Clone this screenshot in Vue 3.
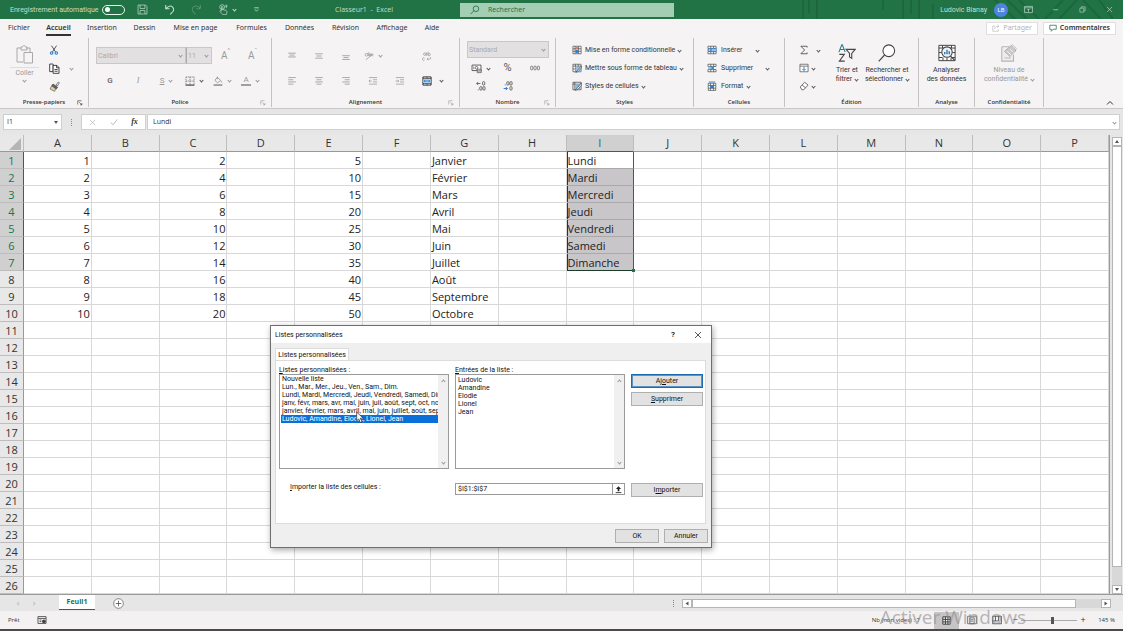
<script setup>
import { ref } from 'vue'

const autosave = ref(false)
const search = ref('')
const nameBox = ref('I1')
const formula = ref('Lundi')
const zoom = ref(56)
const range = ref('$I$1:$I$7')
const selectedList = ref(5)

const tabs = [
  { name: 'Fichier', w: 38 },
  { name: 'Accueil', w: 41 },
  { name: 'Insertion', w: 46 },
  { name: 'Dessin', w: 39 },
  { name: 'Mise en page', w: 63 },
  { name: 'Formules', w: 49 },
  { name: 'Données', w: 47 },
  { name: 'Révision', w: 45 },
  { name: 'Affichage', w: 48 },
  { name: 'Aide', w: 32 }
]

const columns = 'ABCDEFGHIJKLMNOP'.split('')
const months = ['Janvier', 'Février', 'Mars', 'Avril', 'Mai', 'Juin', 'Juillet', 'Août', 'Septembre', 'Octobre']
const days = ['Lundi', 'Mardi', 'Mercredi', 'Jeudi', 'Vendredi', 'Samedi', 'Dimanche']

function cell(col, row) {
  if (col === 'I') return days[row - 1] ?? ''
  if (row > 10) return ''
  if (col === 'A') return row
  if (col === 'C') return row * 2
  if (col === 'E') return row * 5
  if (col === 'G') return months[row - 1]
  return ''
}

function cellClass(col, row) {
  const inRange = col === 'I' && row <= 7
  return {
    num: 'ACE'.includes(col),
    sel: inRange,
    first: inRange && row === 1,
    last: inRange && row === 7
  }
}

const lists = [
  'Nouvelle liste',
  'Lun., Mar., Mer., Jeu., Ven., Sam., Dim.',
  'Lundi, Mardi, Mercredi, Jeudi, Vendredi, Samedi, Dimanche',
  'janv, févr, mars, avr, mai, juin, juil, août, sept, oct, nov, déc',
  'janvier, février, mars, avril, mai, juin, juillet, août, septembre',
  'Ludovic, Amandine, Elodie, Lionel, Jean'
]
const entries = ref('Ludovic\nAmandine\nElodie\nLionel\nJean')

const line = 'fill="none" stroke="currentColor"'
const icons = {
  save: `<g ${line}><path d="M1.5 1.5h11l2 2v11h-13z"/><path d="M4.500 1.500v5h7v-5M4.500 14.500v-5h7v5"/></g>`,
  undo: `<g ${line} stroke-width="1.500"><path d="M2.500 1.500v5.500h5.500M2.800 6.800C6 2.500 10 2 12.500 4.500s2 5.500-1 8L9 15"/></g>`,
  redo: `<g ${line} stroke-width="1.500" stroke-dasharray="2 1"><path d="M13.500 1.500v5.500H8M13.200 6.800C10 2.500 6 2 3.500 4.500s-2 5.500 1 8L7 15"/></g>`,
  touch: `<g ${line}><circle cx="6" cy="4.500" r="3.500"/><path d="M5 10V4.500c0-1.500 2-1.500 2 0V8l5 1.500c1 .5 1 1.500 1 2.500l-1 3.500H7L3 11c-.5-1.500 1-2 2-1M12 1v5M10 3h4"/></g>`,
  custom: `<g ${line} stroke-width="1.500"><path d="M4 5h8M5 8l3 3 3-3"/></g>`,
  search: `<g ${line} stroke-width="1.300"><circle cx="9.500" cy="6" r="4.500"/><path d="M6.300 9.200 1 14.500"/></g>`,
  display: `<g ${line} stroke-width="1.200"><path d="M1 2.500h14v11H1zM1 5h14M8 12V7M6 9l2-2 2 2"/></g>`,
  min: `<path d="M2 8.500h12" ${line} stroke-width="1.500"/>`,
  restore: `<g ${line} stroke-width="1.300"><path d="M2 5h9v9H2z"/><path d="M5 5V2h9v9h-3"/></g>`,
  close: `<path d="m2 2 12 12M14 2 2 14" ${line} stroke-width="1.400"/>`,
  share: `<g ${line} stroke-width="1.200"><path d="M6 4H1.500v10.500h11V10M5 10c0-4 3-5.500 8-5.500M10.500 1.500l3.500 3-3.500 3"/></g>`,
  comment: `<path d="M1.500 2.500h13v8H8l-3.500 4v-4h-3z" ${line} stroke-width="1.500"/>`,
  paste: `<g fill="none" stroke="#a9a9a9"><path d="M8 18H2V4h4M11 4h4v4"/><path d="M6 3h1.500c.3-2 2.700-2 3 0H12v3H6z"/><path d="M9 8.500h8.500V19H9z" fill="#f6f4f5"/></g>`,
  cut: `<g fill="none" stroke="#333" stroke-width="1.300"><path d="m4 1 6.500 10M12 1 5.500 11"/></g><g fill="none" stroke="#2b7fd0" stroke-width="1.800"><circle cx="4.300" cy="12.800" r="2"/><circle cx="11.700" cy="12.800" r="2"/></g>`,
  copy: `<g fill="#fff" stroke="#333" stroke-width="1.300"><path d="M1 1.500h5v11H1z"/><path d="M6 3.500h5.500l3 3v8.500H6zM11 3.500V7h3.500M8 9.500h4.500M8 12h4.500"/></g>`,
  brush: `<path d="m10 6 3.500-4.500 1.500 1L12 7.500z" fill="#fff" stroke="#444"/><path d="m6 4.500 6.500 5-2 2-6.500-5z" fill="#666" stroke="#333"/><path d="m4 7 6 5-2 3-6.500-3.500z" fill="#e9cfa0" stroke="#555"/>`,
  border: `<path d="M1.500 1.500h13M1.500 1.500v13M14.500 1.500v13M8 1.500v13M1.500 8h13" fill="none" stroke="#555" stroke-dasharray="2 1"/><path d="M1 14.500h14" stroke="#222" stroke-width="1.600"/>`,
  fill: `<path d="m7 2 5 5-4.500 4L3 7zM7 1v4M12.500 7.500l1.500 3" fill="none" stroke="#888" stroke-width="1.200"/><path d="M1 13h14v3H1z" fill="#a0a0a0"/>`,
  top: `<path d="M2 3.500h12M4 6.500h8M2 9.500h12" ${line} stroke-width="1.300"/>`,
  mid: `<path d="M2 4.500h12M4 8h8M2 11.500h12" ${line} stroke-width="1.300"/>`,
  bot: `<path d="M2 7.500h12M4 10.500h8M2 13.500h12" ${line} stroke-width="1.300"/>`,
  left: `<path d="M2 2.500h12M2 6h8M2 9.500h12M2 13h8" ${line} stroke-width="1.300"/>`,
  center: `<path d="M2 2.500h12M4 6h8M2 9.500h12M4 13h8" ${line} stroke-width="1.300"/>`,
  right: `<path d="M2 2.500h12M6 6h8M2 9.500h12M6 13h8" ${line} stroke-width="1.300"/>`,
  orient: `<g ${line} stroke-width="1.200"><circle cx="4" cy="6" r="2.200"/><path d="M6 3.500 7.500 8M7 2l3.500 6"/><circle cx="10" cy="6.500" r="1.800"/><path d="m3 14 11-9M14 8.500V5h-3.500"/></g>`,
  wrap: `<g ${line} stroke-width="1.200"><circle cx="4.500" cy="5" r="2"/><path d="M7 2.500V7.500M9.500 1v6.500M4 11.500a2 2 0 1 0 0 3M8 13h4.500c2 0 2-3 0-3M10 11l-2 2 2 2"/><circle cx="11.500" cy="5.500" r="1.800"/></g>`,
  outdent: `<path d="M1.500 2.500h13M8 6h6.500M8 9.500h6.500M1.500 13h13M6 8H1.500M3.500 6l-2 2 2 2" ${line} stroke-width="1.200"/>`,
  indent: `<path d="M1.500 2.500h13M8 6h6.500M8 9.500h6.500M1.500 13h13M1 8h5M4 6l2 2-2 2" ${line} stroke-width="1.200"/>`,
  merge: `<path d="M1.500 1.500h13v13h-13z" fill="#fff" stroke="#222" stroke-width="1.500"/><path d="M1.500 4h13M1.500 12h13M8 1v3M8 12v3" stroke="#222"/><path d="M2.500 5h11v6h-11z" fill="#a8d3f5"/><path d="M3.500 8h9M5.500 6l-2 2 2 2M10.500 6l2 2-2 2" fill="none" stroke="#1674c8" stroke-width="1.200"/>`,
  money: `<path d="M1.500 3h13v8h-13z" fill="#fff" stroke="#444" stroke-width="1.200"/><circle cx="8" cy="7" r="2" fill="none" stroke="#444"/><path d="M4 5v4M9 9h6v5H9z" fill="#f3d9c2" stroke="#555"/><path d="M9 11.500h6" stroke="#555"/>`,
  thousand: `<g fill="none" stroke="#666" stroke-width="1.200"><rect x="1" y="5" width="3.500" height="6" rx="1.500"/><rect x="6.300" y="5" width="3.500" height="6" rx="1.500"/><rect x="11.600" y="5" width="3.500" height="6" rx="1.500"/></g>`,
  decPlus: `<path d="M7 4H1M3.500 1.500 1 4l2.500 2.500" fill="none" stroke="#1674c8" stroke-width="1.400"/><g fill="none" stroke="#444" stroke-width="1.200"><rect x="10.500" y="1" width="3.500" height="5.500" rx="1.500"/><rect x="6" y="9" width="3.500" height="5.500" rx="1.500"/><rect x="11" y="9" width="3.500" height="5.500" rx="1.500"/><path d="M3.500 13.500v1.500"/></g>`,
  decMinus: `<path d="M1 12h6M4.500 9.500 7 12l-2.500 2.500" fill="none" stroke="#1674c8" stroke-width="1.400"/><g fill="none" stroke="#444" stroke-width="1.200"><rect x="6" y="1" width="3.500" height="5.500" rx="1.500"/><rect x="11" y="1" width="3.500" height="5.500" rx="1.500"/><rect x="11" y="9" width="3.500" height="5.500" rx="1.500"/><path d="M3.500 5.500V7"/></g>`,
  cond: `<path d="M1.500 2h13v12h-13zM5 2v12M10.500 2v12M1.500 6h13M1.500 10h13" fill="#fff" stroke="#444" stroke-width="1.100"/><path d="M6 3h3.500v4H6z" fill="#e07a6a"/><path d="M6 8h3.500v5H6z" fill="#2b7fd0"/>`,
  table: `<path d="M1.500 2h13v12h-13zM5.500 2v12M10 2v12M1.500 5h13M1.500 9.500h13" fill="#fff" stroke="#444" stroke-width="1.100"/><path d="M5.500 6H14v7.500H5.500z" fill="#8fc3ee"/><path d="m15 5-6 6.500-3 3.500 4-1.500L15.500 7z" fill="#fff" stroke="#333"/>`,
  style: `<path d="M1.500 2h13v12h-13zM4.500 2v12M1.500 5h13" fill="#fff" stroke="#444" stroke-width="1.200"/><path d="M5 5.500h8.500V13H5z" fill="#7db8ea"/><path d="m15 3-6 7.500-4 4.500 5-2L15.500 6z" fill="#fff" stroke="#333"/>`,
  insert: `<path d="M1.500 2h13v3.500h-13zM1.500 10.500h13V14h-13zM6 2v3.500M10.500 2v3.500M6 10.500V14M10.500 10.500V14" fill="#fff" stroke="#444" stroke-width="1.100"/><path d="M6 5.500h9v5H6z" fill="#8fc3ee" stroke="#1674c8"/><path d="M8 8H1M3.500 5.500 1 8l2.500 2.500" fill="none" stroke="#1674c8" stroke-width="1.200"/>`,
  remove: `<path d="M1.500 2h13v3.500h-13zM1.500 10.500h13V14h-13zM6 2v3.500M10.500 2v3.500M6 10.500V14M10.500 10.500V14" fill="#fff" stroke="#444" stroke-width="1.100"/><path d="M2 6h9v4H2z" fill="#8fc3ee"/><path d="m6 5 6 6M12 5l-6 6" fill="none" stroke="#1463a8" stroke-width="1.400"/>`,
  format: `<path d="M2 3.500h12V15H2zM5.500 3.500V15M10.500 3.500V15M2 7h12M2 11.500h12" fill="#fff" stroke="#444" stroke-width="1.100"/><path d="M5 7h6v4.500H5z" fill="#2b7fd0"/><path d="M3 1.500h10" stroke="#1674c8" stroke-width="1.200"/>`,
  sigma: `<path d="M13 4V2H3l6 6-6 6h10v-2" fill="none" stroke="#444" stroke-width="1.300"/>`,
  down: `<path d="M1.500 2h13v12h-13zM1.500 5h13" fill="#fff" stroke="#555" stroke-width="1.200"/><path d="M8 6v6M5.500 9.500 8 12l2.500-2.500" fill="none" stroke="#1674c8" stroke-width="1.400"/>`,
  eraser: `<path d="m2 9.500 7-7.500 5.500 4.500-7 7.500h-3zM5 6.500l5.500 4.500" fill="#fff" stroke="#444" stroke-width="1.200"/>`,
  sort: `<path d="m1 9 3.200-8h.6L8 9M2.200 6.200h4.600" fill="none" stroke="#21808d" stroke-width="1.200"/><path d="M1.500 11.500H7L1.500 19H7.500" fill="none" stroke="#444" stroke-width="1.200"/><path d="M9 6h10l-3.700 4.500V16l-2.500-1.500v-4z" fill="none" stroke="#444" stroke-width="1.200"/>`,
  find: `<circle cx="12" cy="7.500" r="6.500" fill="#fff" stroke="#444" stroke-width="1.200"/><path d="m7.300 12.200-6.500 7" stroke="#444" stroke-width="1.300"/>`,
  analyse: `<path d="M1 1.500h18v17H1zM1 4.500h18M1 15h4M15 15h4M5.500 15v3.500M10 15v3.500M14.500 15v3.500M5 1.500v3M15 1.500v3M1 9.500h3M16 9.500h3" fill="#fff" stroke="#444" stroke-width="1.100"/><circle cx="10" cy="9" r="5.800" fill="#eef4fa" stroke="#444" stroke-width="1.200"/><path d="m14 13.500 4.500 4.500" stroke="#444" stroke-width="1.400"/><path d="M7.500 11.500V9M10 11.500v-5M12.500 11.500V8" stroke="#2b6ea8" stroke-width="1.500"/>`,
  privacy: `<path d="M2 3h8M2 3v16h13v-7" fill="#ededed" stroke="#b5b5b5" stroke-width="1.200"/><path d="m5 8 7-6 2-1 4 4-1 3-6 6z" fill="#c9c9c9" stroke="#adadad"/><path d="m8 8 5 5M11 5.500l4 4M13.500 1l5 5" stroke="#f4f4f4"/><path d="M5 15.500h7" stroke="#b5b5b5"/>`,
  launcher: `<path d="M2 12V2h10M6 6l7 7M13 8v5H8" ${line} stroke-width="1.600"/>`,
  check: `<path d="m1.500 9 4.500 4.500L14.500 3" ${line} stroke-width="1.600"/>`,
  collapse: `<path d="m2 11 6-6 6 6" ${line} stroke-width="2"/>`,
  plus: `<circle cx="8" cy="8" r="7" fill="#fff" stroke="#555"/><path d="M8 4v8M4 8h8" stroke="#555" stroke-width="1.200"/>`,
  macro: `<path d="M1.500 2.500h13v11h-13zM1.500 5.500h13M4 8h3M4 10.500h3" fill="none" stroke="#444" stroke-width="1.300"/><circle cx="11" cy="10" r="3" fill="#444"/>`,
  normal: `<path d="M1.500 1.500h13v13h-13zM6 1.500v13M10.500 1.500v13M1.500 6h13M1.500 10.500h13" fill="#fff" stroke="#222" stroke-width="1.500"/>`,
  layout: `<path d="M1 2h14v12H1zM4.500 4.500h7V14h-7zM6 7.500h4M6 10h4" fill="none" stroke="#555" stroke-width="1.200"/>`,
  breaks: `<path d="M1 2h14v12H1zM5.500 2v7.500M10.500 2v7.500H1" fill="none" stroke="#444" stroke-width="1.300"/>`,
  upload: `<path d="M8 2 3.500 7H6.500v4h3V7h3z" fill="#222"/><path d="M3 13.500h10" stroke="#222" stroke-width="1.500"/>`
}

const styleCmds = [
  { icon: 'cond', text: 'Mise en forme conditionnelle' },
  { icon: 'table', text: 'Mettre sous forme de tableau' },
  { icon: 'style', text: 'Styles de cellules' }
]
const cellCmds = [
  { icon: 'insert', text: 'Insérer', gap: 'wide' },
  { icon: 'remove', text: 'Supprimer', gap: 'wide' },
  { icon: 'format', text: 'Format', gap: '' }
]
</script>

<template>
  <div class="app">
    <header class="titlebar">
      <svg class="weave" viewBox="0 0 340 19" preserveAspectRatio="xMaxYMid slice" aria-hidden="true">
        <g fill="none" stroke="#185c37" stroke-width="2">
          <path d="M20 0v19M26 0v13M34 0v19M100 0v10M120 0v19M128 0v14M136 0v19M150 4v15M212 0l20 19M224 0l20 19M236 0l20 19M262 19l18-19M276 19l18-19M300 0l18 19M316 0l14 19" />
        </g>
      </svg>
      <div class="quick">
        <label class="autosave">Enregistrement automatique<input v-model="autosave" type="checkbox" class="toggle"></label>
        <button class="tb" aria-label="Enregistrer"><svg class="i11" viewBox="0 0 16 16" v-html="icons.save" /></button>
        <button class="tb" aria-label="Annuler la frappe"><svg class="i11" viewBox="0 0 16 16" v-html="icons.undo" /></button>
        <button class="tb faded" aria-label="Rétablir"><svg class="i11" viewBox="0 0 16 16" v-html="icons.redo" /></button>
        <button class="tb" aria-label="Mode tactile"><svg class="i11" viewBox="0 0 16 16" v-html="icons.touch" /><i class="chev" /></button>
        <button class="tb" aria-label="Personnaliser"><svg class="i9" viewBox="0 0 16 16" v-html="icons.custom" /></button>
      </div>
      <div class="doc">Classeur1&nbsp; -&nbsp; Excel</div>
      <label class="search">
        <svg class="i10" viewBox="0 0 16 16" v-html="icons.search" />
        <input v-model="search" type="search" placeholder="Rechercher" aria-label="Rechercher">
      </label>
      <div class="account">
        <span>Ludovic Bianay</span>
        <span class="avatar">LB</span>
        <button class="wb" aria-label="Options du ruban"><svg class="i9" viewBox="0 0 16 16" v-html="icons.display" /></button>
        <button class="wb" aria-label="Réduire"><svg class="i7" viewBox="0 0 16 16" v-html="icons.min" /></button>
        <button class="wb" aria-label="Restaurer"><svg class="i7" viewBox="0 0 16 16" v-html="icons.restore" /></button>
        <button class="wb" aria-label="Fermer"><svg class="i7" viewBox="0 0 16 16" v-html="icons.close" /></button>
      </div>
    </header>

    <nav class="tabs">
      <button v-for="t in tabs" :key="t.name" :style="{ width: t.w + 'px' }" :class="{ on: t.name === 'Accueil' }"><span>{{ t.name }}</span></button>
      <div class="tabright">
        <button class="pill off"><svg class="i8" viewBox="0 0 16 16" v-html="icons.share" />Partager</button>
        <button class="pill"><svg class="i8" viewBox="0 0 16 16" v-html="icons.comment" />Commentaires</button>
      </div>
    </nav>

    <section class="ribbon">
      <div class="group">
        <div class="body clip">
          <button class="big dim pastebtn"><svg class="i20" viewBox="0 0 20 20" v-html="icons.paste" /><span>Coller</span><i class="chev" /></button>
          <div class="stack">
            <button class="cmd" aria-label="Couper"><svg class="i10" viewBox="0 0 16 16" v-html="icons.cut" /></button>
            <button class="cmd" aria-label="Copier"><svg class="i11" viewBox="0 0 16 16" v-html="icons.copy" /><i class="chev far" /></button>
            <button class="cmd" aria-label="Reproduire la mise en forme"><svg class="i11" viewBox="0 0 16 16" v-html="icons.brush" /></button>
          </div>
        </div>
        <footer>Presse-papiers<svg class="launch dark" viewBox="0 0 16 16" v-html="icons.launcher" /></footer>
      </div>

      <div class="group">
        <div class="body rows2 dim">
          <div class="row">
            <div class="pick fontname"><select disabled aria-label="Police"><option>Calibri</option></select><i class="chev" /></div>
            <div class="pick fontsize"><select disabled aria-label="Taille"><option>11</option></select><i class="chev" /></div>
            <button class="slot grow" aria-label="Agrandir la police">A<sup>^</sup></button>
            <button class="slot grow" aria-label="Réduire la police">A<sup>ˇ</sup></button>
          </div>
          <div class="row">
            <button class="slot glyph bold">G</button>
            <button class="slot glyph italic">I</button>
            <button class="slot glyph under"><u>S</u><i class="chev" /></button>
            <button class="slot" aria-label="Bordures"><svg class="i10" viewBox="0 0 16 16" v-html="icons.border" /><i class="chev dk" /></button>
            <button class="slot" aria-label="Remplissage"><svg class="i10" viewBox="0 0 16 16" v-html="icons.fill" /><i class="chev" /></button>
            <button class="slot glyph" aria-label="Couleur de police"><span class="acolor">A</span><i class="chev" /></button>
          </div>
        </div>
        <footer>Police<svg class="launch" viewBox="0 0 16 16" v-html="icons.launcher" /></footer>
      </div>

      <div class="group">
        <div class="body rows2 dim align">
          <div class="row">
            <button v-for="k in ['top', 'mid', 'bot']" :key="k" class="slot" :aria-label="k"><svg class="i10" viewBox="0 0 16 16" v-html="icons[k]" /></button>
            <button class="slot" aria-label="Orientation"><svg class="i10" viewBox="0 0 16 16" v-html="icons.orient" /><i class="chev" /></button>
            <span class="slot" />
            <button class="slot" aria-label="Renvoyer à la ligne"><svg class="i10" viewBox="0 0 16 16" v-html="icons.wrap" /></button>
          </div>
          <div class="row">
            <button v-for="k in ['left', 'center', 'right', 'outdent', 'indent', 'merge']" :key="k" class="slot" :aria-label="k"><svg class="i10" viewBox="0 0 16 16" v-html="icons[k]" /></button>
            <i class="chev dk" />
          </div>
        </div>
        <footer>Alignement<svg class="launch" viewBox="0 0 16 16" v-html="icons.launcher" /></footer>
      </div>

      <div class="group">
        <div class="body rows3 number">
          <div class="pick fmt"><select disabled aria-label="Format de nombre"><option>Standard</option></select><i class="chev" /></div>
          <div class="row">
            <button class="slot" aria-label="Comptabilité"><svg class="i11" viewBox="0 0 16 16" v-html="icons.money" /><i class="chev dk" /></button>
            <button class="slot pct">%</button>
            <button class="slot" aria-label="Milliers"><svg class="i10" viewBox="0 0 16 16" v-html="icons.thousand" /></button>
          </div>
          <div class="row">
            <button class="slot" aria-label="Ajouter une décimale"><svg class="i10" viewBox="0 0 16 16" v-html="icons.decPlus" /></button>
            <button class="slot" aria-label="Réduire les décimales"><svg class="i10" viewBox="0 0 16 16" v-html="icons.decMinus" /></button>
          </div>
        </div>
        <footer>Nombre<svg class="launch" viewBox="0 0 16 16" v-html="icons.launcher" /></footer>
      </div>

      <div class="group">
        <div class="body rows3 wide">
          <button v-for="c in styleCmds" :key="c.text" class="cmd"><svg class="i10" viewBox="0 0 16 16" v-html="icons[c.icon]" /><span>{{ c.text }}</span><i class="chev dk" /></button>
        </div>
        <footer>Styles</footer>
      </div>

      <div class="group">
        <div class="body rows3 cells">
          <button v-for="c in cellCmds" :key="c.text" class="cmd" :class="c.gap"><svg class="i10" viewBox="0 0 16 16" v-html="icons[c.icon]" /><span>{{ c.text }}</span><i class="chev dk" /></button>
        </div>
        <footer>Cellules</footer>
      </div>

      <div class="group">
        <div class="body edit">
          <div class="stack">
            <button class="cmd wide" aria-label="Somme automatique"><svg class="i10" viewBox="0 0 16 16" v-html="icons.sigma" /><i class="chev dk" /></button>
            <button class="cmd" aria-label="Remplissage"><svg class="i10" viewBox="0 0 16 16" v-html="icons.down" /><i class="chev dk" /></button>
            <button class="cmd" aria-label="Effacer"><svg class="i10" viewBox="0 0 16 16" v-html="icons.eraser" /><i class="chev dk" /></button>
          </div>
          <button class="big sort"><svg class="i18" viewBox="0 0 20 20" v-html="icons.sort" /><span>Trier et</span><span>filtrer<i class="chev dk" /></span></button>
          <button class="big find"><svg class="i18" viewBox="0 0 20 20" v-html="icons.find" /><span>Rechercher et</span><span>sélectionner<i class="chev dk" /></span></button>
        </div>
        <footer>Édition</footer>
      </div>

      <div class="group">
        <div class="body mid">
          <button class="big"><svg class="i18" viewBox="0 0 20 20" v-html="icons.analyse" /><span>Analyser</span><span>des données</span></button>
        </div>
        <footer>Analyse</footer>
      </div>

      <div class="group">
        <div class="body mid dim">
          <button class="big"><svg class="i18" viewBox="0 0 20 20" v-html="icons.privacy" /><span>Niveau de</span><span>confidentialité<i class="chev" /></span></button>
        </div>
        <footer>Confidentialité</footer>
      </div>

      <div class="tail"><button aria-label="Réduire le ruban"><svg class="i8" viewBox="0 0 16 16" v-html="icons.collapse" /></button></div>
    </section>

    <section class="fbar">
      <div class="namebox"><input v-model="nameBox" aria-label="Zone Nom"><i class="tri" /></div>
      <i class="dots" />
      <div class="fbtns">
        <button aria-label="Annuler la saisie"><svg class="i7" viewBox="0 0 16 16" v-html="icons.close" /></button>
        <button aria-label="Entrer"><svg class="i8" viewBox="0 0 16 16" v-html="icons.check" /></button>
        <button class="fx" aria-label="Insérer une fonction">fx</button>
      </div>
      <div class="finput"><input v-model="formula" aria-label="Barre de formule"><i class="chev" /></div>
    </section>

    <main class="sheet">
      <div class="gridwrap">
        <table>
          <colgroup><col class="rh"><col v-for="c in columns" :key="c"></colgroup>
          <thead>
            <tr><th class="corner"><i /></th><th v-for="c in columns" :key="c" :class="{ hot: c === 'I' }">{{ c }}</th></tr>
          </thead>
          <tbody>
            <tr v-for="r in 26" :key="r">
              <th :class="{ hot: r <= 7 }">{{ r }}</th>
              <td v-for="c in columns" :key="c" :class="cellClass(c, r)">{{ cell(c, r) }}</td>
            </tr>
          </tbody>
        </table>
      </div>
      <div class="vscroll"><button aria-label="Défiler vers le haut"><i class="tri up" /></button><div class="vtrack"><div class="vthumb" /></div><button aria-label="Défiler vers le bas"><i class="tri" /></button></div>
    </main>

    <section class="sheets">
      <button class="nav" aria-label="Feuille précédente">‹</button>
      <button class="nav" aria-label="Feuille suivante">›</button>
      <button class="sheettab">Feuil1</button>
      <button class="add" aria-label="Nouvelle feuille"><svg class="i11" viewBox="0 0 16 16" v-html="icons.plus" /></button>
      <i class="dots" />
      <div class="hscroll"><button aria-label="Défiler à gauche"><i class="tri lt" /></button><div class="htrack"><div class="hthumb" /></div><button aria-label="Défiler à droite"><i class="tri rt" /></button></div>
    </section>

    <footer class="status">
      <span class="ready">Prêt</span>
      <button class="macro" aria-label="Enregistrer une macro"><svg class="i10" viewBox="0 0 16 16" v-html="icons.macro" /></button>
      <span class="count">Nb (non vides) : 7</span>
      <button class="view on" aria-label="Normal"><svg class="i9" viewBox="0 0 16 16" v-html="icons.normal" /></button>
      <button class="view" aria-label="Mise en page"><svg class="i10" viewBox="0 0 16 16" v-html="icons.layout" /></button>
      <button class="view" aria-label="Sauts de page"><svg class="i10" viewBox="0 0 16 16" v-html="icons.breaks" /></button>
      <button class="zb">−</button>
      <input v-model="zoom" class="zoom" type="range" aria-label="Zoom">
      <button class="zb">+</button>
      <span class="pc">145 %</span>
      <span class="watermark">Activer Windows</span>
    </footer>

    <div class="dialog" role="dialog" aria-labelledby="dlg-title">
      <div class="dhead"><span id="dlg-title">Listes personnalisées</span><button class="help">?</button><button aria-label="Fermer"><svg class="i8" viewBox="0 0 16 16" v-html="icons.close" /></button></div>
      <button class="dtab">Listes personnalisées</button>
      <div class="panel">
        <span id="lb" class="lab"><u>L</u>istes personnalisées :</span>
        <label for="ent" class="lab c2"><u>E</u>ntrées de la liste :</label>
        <div class="box listbox">
          <ul role="listbox" aria-labelledby="lb">
            <li v-for="(l, i) in lists" :key="l" role="option" :aria-selected="i === selectedList" :class="{ on: i === selectedList }" @click="selectedList = i">{{ l }}</li>
          </ul>
          <div class="sb"><i class="chev up" /><i class="chev" /></div>
        </div>
        <div class="box">
          <textarea id="ent" v-model="entries" />
          <div class="sb"><i class="chev up" /><i class="chev" /></div>
        </div>
        <div class="side">
          <button class="btn focus">Aj<u>o</u>uter</button>
          <button class="btn"><u>S</u>upprimer</button>
        </div>
        <label for="rng" class="imp"><u>I</u>mporter la liste des cellules :</label>
        <div class="rng"><input id="rng" v-model="range"><button aria-label="Réduire la boîte"><svg class="i9" viewBox="0 0 16 16" v-html="icons.upload" /></button></div>
        <button class="btn">I<u>m</u>porter</button>
      </div>
      <div class="dfoot"><button class="btn">OK</button><button class="btn">Annuler</button></div>
    </div>

    <svg class="cursor" viewBox="0 0 12 18" aria-hidden="true"><path d="M1 1v13l3-3 2.500 5.500 2.500-1L6.500 10H11z" fill="#fff" stroke="#222" /></svg>
  </div>
</template>

<style>
html, body, #app { height: 100%; }
body { overflow: hidden; }
</style>

<style scoped>
.app { position: relative; height: 100%; display: flex; flex-direction: column; overflow: hidden; background: #e6e6e6; color: #333; font: 7px/10px Roboto, "Open Sans", sans-serif; border-bottom: 2px solid #4a4a4a; box-sizing: border-box; }
.app *, .app *::before, .app *::after { box-sizing: border-box; }
button, input, select, textarea { font: inherit; color: inherit; background: none; border: 0; padding: 0; margin: 0; outline: 0; border-radius: 0; }
button { display: flex; align-items: center; justify-content: center; white-space: nowrap; }
svg { display: block; flex: none; }
.i7 { width: 7px; height: 7px; }
.i8 { width: 8px; height: 8px; }
.i9 { width: 9px; height: 9px; }
.i10 { width: 10px; height: 10px; }
.i11 { width: 11px; height: 11px; }
.i18 { width: 18px; height: 18px; }
.i20 { width: 20px; height: 20px; }
.chev { display: inline-block; flex: none; width: 3px; height: 3px; border: solid #999; border-width: 0 1px 1px 0; transform: rotate(45deg); }
.chev.dk { border-color: #555; }
.chev.up { transform: rotate(225deg); }
.tri { display: block; flex: none; width: 0; height: 0; border: 3px solid transparent; border-top-color: #555; border-bottom: 0; border-left-width: 2px; border-right-width: 2px; }
.tri.up { transform: rotate(180deg); }
.tri.lt { transform: rotate(90deg); }
.tri.rt { transform: rotate(-90deg); }

.titlebar { position: relative; flex: none; height: 19px; display: flex; align-items: center; background: #217346; color: #c4dfd0; }
.weave { position: absolute; right: 0; top: 0; height: 19px; width: 340px; opacity: .5; }
.quick { flex: none; width: 335px; display: flex; align-items: center; padding-left: 10px; }
.autosave { display: flex; align-items: center; justify-content: space-between; width: 115px; margin-right: 4px; white-space: nowrap; }
.toggle { flex: none; appearance: none; width: 23px; height: 10px; border: 1px solid #e8f4ee; border-radius: 5px; display: flex; align-items: center; padding-left: 2px; }
.toggle::before { content: ""; width: 5px; height: 5px; border-radius: 50%; background: #fff; }
.toggle:checked::before { margin-left: 12px; }
.tb { width: 27px; gap: 4px; height: 15px; }
.tb:nth-child(5) { width: 33px; }
.faded { opacity: .4; }
.tb .chev { border-color: #c4dfd0; }
.doc { flex: none; width: 125px; font-family: "Open Sans", sans-serif; }
.search { flex: none; width: 19.1%; height: 14px; display: flex; align-items: center; gap: 8px; padding-left: 10px; background: #a3ceb3; color: #1f6a41; font-family: "Open Sans", sans-serif; }
.search input { flex: 1; min-width: 0; appearance: none; }
.search input::placeholder { color: #1f6a41; opacity: 1; }
.account { position: relative; margin-left: auto; display: flex; align-items: center; }
.avatar { width: 14px; height: 14px; margin: 0 7px; border-radius: 50%; background: #4a86e0; color: #fff; font-size: 6px; line-height: 14px; text-align: center; }
.wb { width: 27px; height: 15px; }

.tabs { flex: none; height: 18px; display: flex; align-items: stretch; background: #f5f3f4; font-family: "Noto Sans", "Open Sans", sans-serif; }
.tabs > button { flex: none; height: 18px; }
.tabs > button span { padding: 2px 0 1px; border-bottom: 2px solid transparent; }
.tabs > .on { font-weight: 600; }
.tabs > .on span { border-color: #333; }
.tabright { margin-left: auto; padding-right: 7px; display: flex; align-items: center; gap: 5px; }
.pill { height: 13px; gap: 3px; padding: 0 5px; background: #fff; border: 1px solid #e0dede; font-weight: 600; }
.pill svg { color: #217346; }
.pill.off, .pill.off svg { color: #b5b3b4; font-weight: 400; }

.ribbon { flex: none; display: grid; grid-template-columns: 89px 183px 188px 96px 138px 91px 134px 56px 69px 1fr; background: #f5f3f4; border-bottom: 1px solid #c9c7c8; padding: 1px 0; }
.group { position: relative; display: flex; flex-direction: column; border-right: 1px solid #c4c2c3; }
.group footer { display: flex; align-items: center; justify-content: center; height: 9px; font: 600 6px/9px "Open Sans", sans-serif; }
.launch { position: absolute; right: 5px; bottom: 1px; width: 6px; height: 6px; color: #999; }
.launch.dark { color: #333; }
.body { height: 60px; display: flex; }
.dim { color: #999; }
.clip { padding-left: 10px; }
.big { flex-direction: column; justify-content: flex-start; padding-top: 6px; line-height: 9px; }
.big svg { margin-bottom: 4px; }
.big span { display: flex; align-items: center; gap: 3px; }
.pastebtn { width: 29px; }
.pastebtn svg { margin-bottom: 3px; }
.pastebtn span { width: 29px; justify-content: center; border-top: 1px solid #ddd; padding: 1px 0; }
.stack { display: flex; flex-direction: column; padding-top: 3px; }
.clip .stack { padding-left: 10px; }
.cmd { height: 18px; justify-content: flex-start; gap: 3px; }
.chev.far { margin-left: 7px; }
.rows2 { flex-direction: column; padding: 5px 0 0 7px; }
.rows2 .row { height: 25px; }
.row { display: flex; align-items: center; }
.slot { width: 27px; height: 18px; gap: 5px; flex: none; }
.rows2 .row:last-child .slot { width: 28px; }
.align .row:last-child .slot { width: 27px; }
.pick { position: relative; display: flex; align-items: center; height: 17px; background: #e2e0e1; border: 1px solid #c9c7c8; color: #aaa; }
.pick select { appearance: none; width: 100%; height: 100%; padding-left: 1px; opacity: 1; }
.pick .chev { position: absolute; right: 3px; }
.fontname { width: 90px; }
.fontsize { width: 26px; border-left-color: #aaa; }
.grow { font-size: 10px; }
.grow sup { font-size: 6px; line-height: 6px; align-self: flex-start; margin-left: -5px; }
.glyph { font-size: 8px; }
.bold { font-weight: 700; color: #777; }
.italic { font-style: italic; font-family: "Liberation Serif", serif; }
.acolor { border-bottom: 2px solid #a0a0a0; line-height: 8px; padding: 0 2px; }
.align { padding-left: 6px; }
.rows3 { flex-direction: column; padding-top: 3px; }
.number { padding-left: 7px; }
.number .fmt { width: 82px; height: 17px; margin-bottom: 1px; }
.number .row { height: 18px; }
.pct { font-size: 11px; color: #555; }
.wide.body { padding-left: 16px; }
.cells { padding-left: 13px; }
.cells .cmd { gap: 4px; }
.cells .wide .chev { margin-left: 9px; }
.edit { padding-left: 14px; }
.edit .stack { width: 34px; }
.edit .wide .chev { margin-left: 5px; }
.sort { width: 28px; }
.find { width: 52px; }
.mid { justify-content: center; }
.tail { display: flex; align-items: flex-end; justify-content: flex-end; padding-right: 9px; }

.fbar { flex: none; display: flex; align-items: center; padding: 5px 3px 5px; height: 26px; font-family: "Open Sans", sans-serif; }
.namebox, .fbtns, .finput { height: 16px; background: #fff; border: 1px solid #cfcfcf; display: flex; align-items: center; }
.namebox { width: 59px; padding: 0 3px; }
.namebox input { flex: 1; min-width: 0; }
.dots { flex: none; width: 1px; height: 7px; margin: 0 9px; border-left: 1px dotted #888; }
.fbtns { width: 65px; color: #aaa; }
.fbtns button { flex: 1; }
.fbtns .fx { color: #333; font: italic 700 8px/10px "Liberation Serif", serif; }
.finput { flex: 1; margin-left: 1px; padding: 0 3px 0 5px; }
.finput input { flex: 1; min-width: 0; }

.sheet { flex: 1; min-height: 0; display: flex; border-bottom: 1px solid #9a9a9a; }
.gridwrap { flex: 1; min-width: 0; overflow: hidden; border-right: 1px solid #9a9a9a; background: #fff; }
table { width: 100%; table-layout: fixed; border-collapse: separate; border-spacing: 0; font: 11px/16px "Open Sans", "Noto Sans", sans-serif; color: #222; }
col.rh { width: 24px; }
th, td { height: 17px; padding: 0 1px; border: 0 solid #d9d7d8; border-width: 0 1px 1px 0; white-space: nowrap; overflow: hidden; text-align: left; }
tbody th, tbody td { padding-top: 2px; line-height: 14px; }
th { font-weight: 400; text-align: center; background: #e8e8e8; color: #333; border-color: #bdbdbd; }
thead th { border-bottom-color: #999; }
tbody th { border-right-color: #999; }
th.hot { background: #d0d0d0; color: #217346; }
thead th.hot { border-bottom: 1px solid #217346; }
tbody th.hot { border-right: 1px solid #217346; }
.corner i { display: block; margin: 1px 0 0 8px; width: 0; height: 0; border: solid transparent; border-width: 0 0 12px 12px; border-bottom-color: #b5b5b5; }
td.num { text-align: right; }
td.sel { position: relative; overflow: visible; background: #c8c6c9; border-bottom-color: #aaa8ab; border-right-color: #217346; box-shadow: inset 1px 0 #1d3d2c; }
td.sel.first { background: #fff; }
td.last { border-bottom-color: #1d3d2c; }
td.last::after { content: ""; position: absolute; right: -2px; bottom: -2px; width: 3px; height: 3px; background: #217346; }
.vscroll { flex: none; width: 13px; padding: 2px 1px 0 2px; display: flex; flex-direction: column; }
.vscroll button, .hscroll button { flex: none; width: 10px; height: 9px; background: #fff; border: 1px solid #b5b5b5; }
.vtrack { flex: 1; background: #d8d8d8; }
.vthumb { width: 10px; height: 96%; background: #fff; border: 1px solid #b5b5b5; }

.sheets { flex: none; height: 16px; display: flex; align-items: center; padding: 0 12px 0 10px; background: #e6e6e6; font-family: "Open Sans", sans-serif; }
.nav { width: 16px; font-size: 9px; color: #aaa; }
.nav + .sheettab { margin-left: 17px; }
.sheettab { width: 36px; height: 15px; align-self: flex-start; background: #fff; border-bottom: 1px solid #217346; font-weight: 700; color: #217346; }
.add { margin-left: 18px; }
.sheets .dots { margin: 0 8px 0 auto; }
.hscroll { width: 39%; display: flex; }
.htrack { flex: 1; background: #d8d8d8; }
.hthumb { width: 94%; height: 9px; background: #fff; border: 1px solid #b5b5b5; }

.status { position: relative; flex: none; height: 18px; display: flex; align-items: center; padding: 0 8px; background: #f3f1f2; font: 6px/10px "Open Sans", sans-serif; }
.ready { width: 29px; }
.count { margin-left: auto; margin-right: 14px; }
.view { width: 25px; height: 17px; }
.view.on { background: #c6c4c5; }
.zb { width: 12px; font-size: 9px; }
.zoom { appearance: none; width: 56px; height: 8px; background: linear-gradient(#aaa, #aaa) center / 100% 1px no-repeat; }
.zoom::-webkit-slider-thumb { appearance: none; width: 3px; height: 7px; background: #555; }
.pc { width: 26px; text-align: right; }
.watermark { position: absolute; right: 97px; top: -3px; font-size: 19px; line-height: 18px; color: #8e8c8d; opacity: .6; pointer-events: none; }

.dialog { position: absolute; left: 270px; top: 325px; width: 442px; background: #f0eff0; border: 1px solid #6e6e6e; box-shadow: 1px 2px 6px rgba(0, 0, 0, .35); color: #111; line-height: 8px; }
.dhead { display: flex; align-items: center; height: 17px; padding: 0 9px 0 4px; background: #fff; }
.dhead span { margin-right: auto; }
.dhead button + button { margin-left: 19px; }
.help { font-size: 8px; font-weight: 600; }
.dtab { margin: 5px 0 0 4px; width: 74px; height: 12px; background: #fff; border: 1px solid #dcdcdc; border-bottom: 0; }
.panel { margin: 0 5px 0 4px; padding: 5px 3px 26px; background: #fff; border: 1px solid #dcdcdc; display: grid; grid-template-columns: 170px 170px 72px; grid-template-rows: 8px 95px 28px; column-gap: 6px; }
.lab { white-space: nowrap; }
.c2 { grid-column: 2 / 4; }
.box { display: flex; border: 1px solid #9a9a9a; background: #fff; overflow: hidden; min-width: 0; }
ul { list-style: none; margin: 0; padding: 0 0 0 1px; flex: 1; min-width: 0; }
li { height: 8px; padding-left: 1px; overflow: hidden; white-space: nowrap; }
li.on { background: #0a6fd8; color: #fff; }
textarea { flex: 1; min-width: 0; resize: none; padding: 1px 2px; line-height: 8px; overflow: hidden; }
.sb { flex: none; width: 10px; background: #f1f0f1; display: flex; flex-direction: column; align-items: center; justify-content: space-between; padding: 5px 0 4px; }
.side { display: flex; flex-direction: column; gap: 4px; }
.btn { height: 14px; background: #e3e2e3; border: 1px solid #b0afb0; }
.btn.focus { border-color: #1a6bb0; box-shadow: inset 0 0 0 1px #5d93c4; }
.panel > .imp { padding-left: 11px; align-self: start; white-space: nowrap; }
.imp, .imp + .rng, .imp + .rng + .btn { margin-top: 14px; }
.rng { display: flex; height: 12px; border: 1px solid #9a9a9a; }
.rng input { flex: 1; min-width: 0; padding-left: 2px; }
.rng button { width: 12px; border-left: 1px solid #9a9a9a; }
.dfoot { display: flex; justify-content: flex-end; gap: 5px; padding: 5px 3px 4px; }
.dfoot .btn { width: 44px; }
.cursor { position: absolute; left: 356px; top: 411px; width: 8px; height: 13px; }
</style>
